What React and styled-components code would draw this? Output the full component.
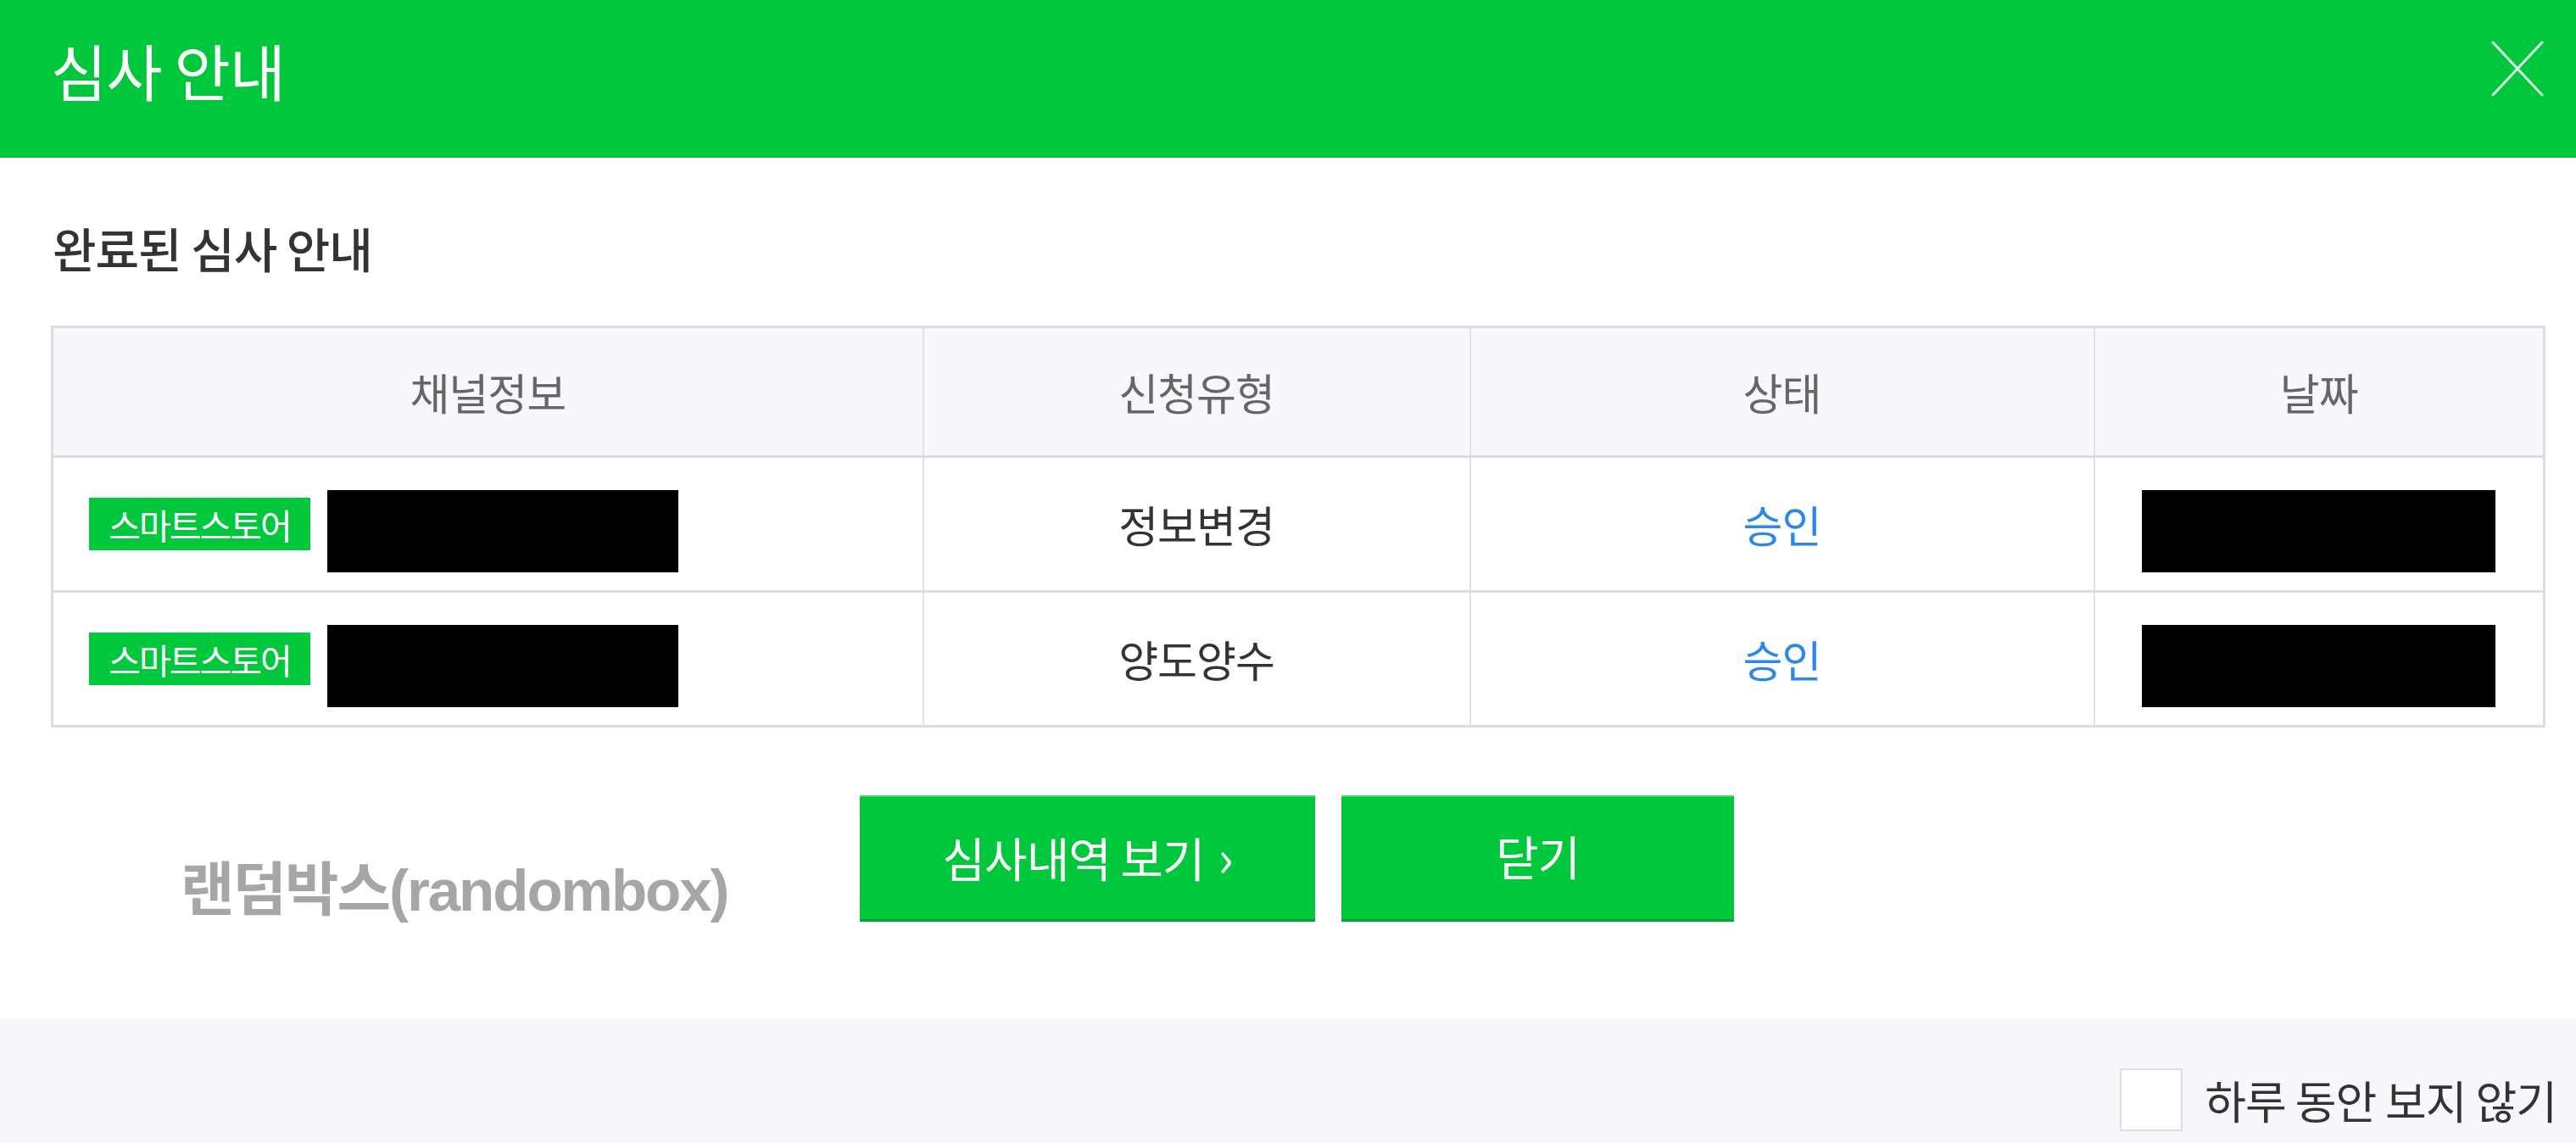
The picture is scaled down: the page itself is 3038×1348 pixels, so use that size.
import React from 'react';
import styled, { createGlobalStyle } from 'styled-components';

const GlobalStyle = createGlobalStyle`
  html, body {
    margin: 0;
    padding: 0;
    background: #fff;
  }
  body {
    font-family: "Noto Sans CJK KR", "Noto Sans", sans-serif;
    color: #333;
  }
`;

const GREEN = '#00c73c';

const Popup = styled.div`
  width: 3038px;
  height: 1348px;
  display: flex;
  flex-direction: column;
  overflow: hidden;
  background: #fff;
`;

const Header = styled.header`
  height: 186px;
  flex: none;
  background: ${GREEN};
  display: flex;
  align-items: center;
  justify-content: space-between;
  padding: 0 36px 24px 60px;
  box-sizing: border-box;
`;

const Title = styled.h1`
  margin: 0;
  font-size: 72px;
  font-weight: 400;
  color: #fff;
  letter-spacing: -1px;
`;

const CloseButton = styled.button`
  width: 66px;
  height: 66px;
  padding: 0;
  border: none;
  background: transparent;
  cursor: pointer;
  display: flex;
  align-items: center;
  justify-content: center;
`;

const Body = styled.main`
  position: relative;
  flex: 1;
  padding: 68px 39px 0 60px;
  display: flex;
  flex-direction: column;
`;

const SubTitle = styled.h2`
  margin: 0 0 54px 2px;
  font-size: 56px;
  line-height: 76px;
  font-weight: 500;
  color: #333;
  letter-spacing: -1px;
`;

const Table = styled.table`
  width: 100%;
  border-collapse: collapse;
  table-layout: fixed;
  border: 3px solid #dcdde3;
`;

const Col = styled.col`
  width: ${p => p.$w}px;
`;

const Th = styled.th`
  height: 148px;
  background: #f7f8fb;
  border-left: 2px solid #e1e2e7;
  border-bottom: 3px solid #dcdde3;
  font-size: 51px;
  font-weight: 400;
  color: #666;
  letter-spacing: -1px;
`;

const Td = styled.td`
  height: 154px;
  border-left: 2px solid #e1e2e7;
  border-bottom: 3px solid #dcdde3;
  text-align: center;
  font-size: 51px;
  color: ${p => (p.$accent ? '#2b87e8' : '#333')};
  letter-spacing: -1px;
`;

const ChannelCell = styled.div`
  display: flex;
  align-items: center;
  gap: 20px;
  padding-left: 41px;
`;

const Badge = styled.span`
  display: inline-flex;
  align-items: center;
  justify-content: center;
  width: 261px;
  height: 62px;
  background: ${GREEN};
  color: #fff;
  font-size: 41px;
  letter-spacing: -2px;
`;

const Redacted = styled.span`
  display: inline-block;
  width: ${p => p.$w}px;
  height: 97px;
  margin-top: 16px;
  background: #000;
  vertical-align: middle;
`;

const Buttons = styled.div`
  display: flex;
  justify-content: center;
  gap: 31px;
  margin-top: 80px;
`;

const GreenButton = styled.button`
  width: ${p => p.$w}px;
  height: 149px;
  background: ${GREEN};
  border: none;
  border-top: 2px solid #3fd768;
  border-bottom: 3px solid #00a832;
  color: #fff;
  font-family: inherit;
  font-size: 55px;
  letter-spacing: -1px;
  padding-bottom: 10px;
  cursor: pointer;
`;

const Chevron = styled.span`
  font-size: 60px;
  margin-left: 16px;
`;

const Watermark = styled.div`
  position: absolute;
  left: 213px;
  top: 808px;
  font-family: "Liberation Sans", "Noto Sans CJK KR", sans-serif;
  font-weight: 700;
  font-size: 69px;
  color: #a6a6a6;
  letter-spacing: -2px;
  pointer-events: none;
`;

const Footer = styled.footer`
  height: 147px;
  flex: none;
  background: #f7f8fb;
  display: flex;
  justify-content: flex-end;
  align-items: flex-start;
  padding: 58px 23px 0 0;
  box-sizing: border-box;
`;

const CheckLabel = styled.label`
  display: flex;
  align-items: center;
  gap: 26px;
  font-size: 53px;
  color: #333;
  letter-spacing: -1px;
  cursor: pointer;
`;

const CheckBox = styled.span`
  width: 70px;
  height: 70px;
  background: #fff;
  border: 2px solid #dcdde3;
`;

const rows = [
  { type: '정보변경', status: '승인' },
  { type: '양도양수', status: '승인' },
];

export default function App() {
  return (
    <>
      <GlobalStyle />
      <Popup>
        <Header>
          <Title>심사 안내</Title>
          <CloseButton aria-label="닫기">
            <svg width="62" height="66" viewBox="0 0 62 66">
              <path d="M2 2 L60 64 M60 2 L2 64" stroke="#fff" strokeWidth="3" strokeLinecap="round" fill="none" opacity="0.85" />
            </svg>
          </CloseButton>
        </Header>
        <Body>
          <SubTitle>완료된 심사 안내</SubTitle>
          <Table>
            <colgroup>
              <Col $w={1027} />
              <Col $w={645} />
              <Col $w={736} />
              <Col $w={531} />
            </colgroup>
            <thead>
              <tr>
                <Th>채널정보</Th>
                <Th>신청유형</Th>
                <Th>상태</Th>
                <Th>날짜</Th>
              </tr>
            </thead>
            <tbody>
              {rows.map((r, i) => (
                <tr key={i}>
                  <Td>
                    <ChannelCell>
                      <Badge>스마트스토어</Badge>
                      <Redacted $w={414} />
                    </ChannelCell>
                  </Td>
                  <Td>{r.type}</Td>
                  <Td $accent>{r.status}</Td>
                  <Td>
                    <Redacted $w={417} />
                  </Td>
                </tr>
              ))}
            </tbody>
          </Table>
          <Buttons>
            <GreenButton $w={537}>심사내역 보기<Chevron>›</Chevron></GreenButton>
            <GreenButton $w={463}>닫기</GreenButton>
          </Buttons>
          <Watermark>랜덤박스(randombox)</Watermark>
        </Body>
        <Footer>
          <CheckLabel>
            <CheckBox />
            하루 동안 보지 않기
          </CheckLabel>
        </Footer>
      </Popup>
    </>
  );
}
